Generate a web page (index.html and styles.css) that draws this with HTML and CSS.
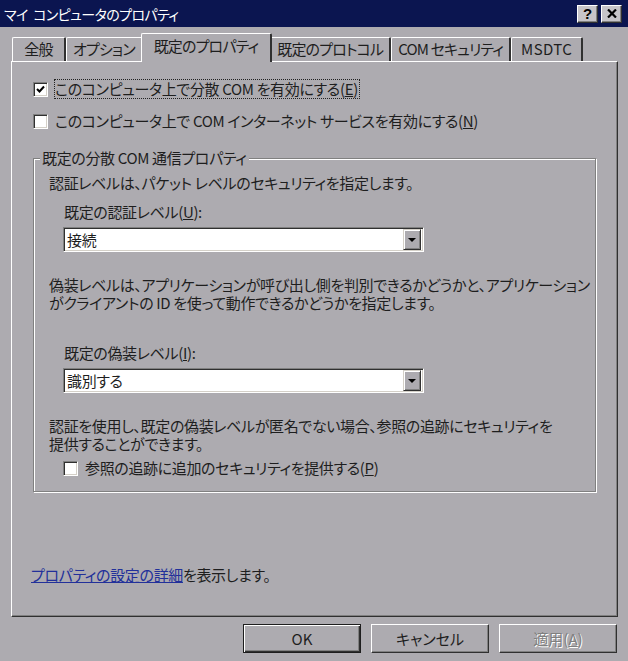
FILE: index.html
```html
<!DOCTYPE html>
<html lang="ja">
<head>
    <meta charset="UTF-8">
    <title>マイ コンピュータのプロパティ</title>
    <link rel="stylesheet" href="styles.css">
</head>
<body>
    <div class="window">
        <div class="titlebar">
            <span class="title">マイ コンピュータのプロパティ</span>
            <div class="caption-buttons">
                <span class="cap-btn">?</span>
                <span class="cap-btn">
                    <svg width="10" height="9" viewBox="0 0 10 9"><path d="M1 0.5 L9 8.5 M9 0.5 L1 8.5" stroke="#000" stroke-width="2.2" fill="none"/></svg>
                </span>
            </div>
        </div>

        <div class="tabs">
            <div class="tab">全般</div>
            <div class="tab">オプション</div>
            <div class="tab active">既定のプロパティ</div>
            <div class="tab">既定のプロトコル</div>
            <div class="tab">COM セキュリティ</div>
            <div class="tab latin">MSDTC</div>
        </div>

        <div class="panel">
            <div class="check-row">
                <span class="checkbox">
                    <svg width="9" height="9" viewBox="0 0 9 9"><path d="M1 4 L3.5 6.5 L8 1.5" stroke="#000" stroke-width="2" fill="none"/></svg>
                </span>
                <span class="check-label focus">このコンピュータ上で分散 COM を有効にする(<u>E</u>)</span>
            </div>
            <div class="check-row second">
                <span class="checkbox"></span>
                <span class="check-label">このコンピュータ上で COM インターネット サービスを有効にする(<u>N</u>)</span>
            </div>

            <fieldset class="group">
                <legend>既定の分散 COM 通信プロパティ</legend>
                <p class="group-text first">認証レベルは、パケット レベルのセキュリティを指定します。</p>
                <div class="field-label">既定の認証レベル(<u>U</u>):</div>
                <div class="combo">
                    <span class="combo-value">接続</span>
                    <span class="combo-arrow"></span>
                </div>
                <p class="group-text after-combo">偽装レベルは、アプリケーションが呼び出し側を判別できるかどうかと、アプリケーション<br>がクライアントの ID を使って動作できるかどうかを指定します。</p>
                <div class="field-label wide-gap">既定の偽装レベル(<u>I</u>):</div>
                <div class="combo">
                    <span class="combo-value">識別する</span>
                    <span class="combo-arrow"></span>
                </div>
                <p class="group-text after-combo">認証を使用し、既定の偽装レベルが匿名でない場合、参照の追跡にセキュリティを<br>提供することができます。</p>
                <div class="check-row inner">
                    <span class="checkbox"></span>
                    <span class="check-label">参照の追跡に追加のセキュリティを提供する(<u>P</u>)</span>
                </div>
            </fieldset>

            <p class="info"><a href="#">プロパティの設定の詳細</a>を表示します。</p>
        </div>

        <div class="buttons">
            <button class="btn default">OK</button>
            <button class="btn">キャンセル</button>
            <button class="btn" disabled>適用(<u>A</u>)</button>
        </div>
    </div>
</body>
</html>
```

FILE: styles.css
```css
* {
    box-sizing: border-box;
}
body {
    margin: 0;
    background: #adabb0;
    font-family: "Noto Sans CJK JP", "Noto Sans", sans-serif;
    font-size: 15px;
    line-height: 18px;
    letter-spacing: -0.35px;
    color: #1e1e1e;
    font-feature-settings: "palt";
}
.window {
    width: 628px;
    height: 661px;
    background: #adabb0;
}
.titlebar {
    height: 27px;
    background: #0b1550;
    display: flex;
    align-items: center;
    justify-content: space-between;
    padding: 0 6px 0 4px;
    color: #fff;
}
.title {
    font-size: 14px;
    letter-spacing: -0.6px;
    word-spacing: 3px;
}
.caption-buttons {
    display: flex;
    gap: 3px;
}
.cap-btn {
    width: 21px;
    height: 18px;
    background: #c6c4c8;
    border: 1px solid;
    border-color: #fff #303030 #303030 #fff;
    box-shadow: inset -1px -1px 0 #808080;
    display: flex;
    align-items: center;
    justify-content: center;
    color: #000;
    font-family: "Liberation Sans", sans-serif;
    font-weight: bold;
    font-size: 15px;
}
.tabs {
    display: flex;
    align-items: flex-end;
    height: 34px;
    padding-left: 12px;
}
.tab {
    height: 24px;
    min-width: 54px;
    padding: 0 6px;
    line-height: 22px;
    text-align: center;
    letter-spacing: -0.85px;
    border-top: 1px solid #fff;
    border-left: 1px solid #fff;
    border-right: 2px solid #303030;
    border-radius: 2px 2px 0 0;
    white-space: nowrap;
}
.tab.latin {
    padding: 0 9px;
    letter-spacing: 0.4px;
}
.tab.active {
    position: relative;
    z-index: 1;
    height: 29px;
    margin: 0 -2px -1px;
    padding: 1px 12px 0;
    background: #adabb0;
}
.panel {
    margin: 0 10px 0 11px;
    height: 556px;
    border-left: 1px solid #fff;
    border-top: 1px solid #fff;
    border-right: 1px solid #303030;
    border-bottom: 1px solid #303030;
    box-shadow: inset -1px -1px 0 #808080;
    padding: 17px 0 0 21px;
}
.check-row {
    display: flex;
    align-items: center;
    height: 20px;
    gap: 6px;
}
.check-row.second {
    margin-top: 12px;
}
.check-row.inner {
    margin: 5px 0 0 14px;
}
.checkbox {
    width: 15px;
    height: 15px;
    background: #fff;
    border: 1px solid;
    border-color: #808080 #fff #fff #808080;
    box-shadow: inset 1px 1px 0 #303030, inset -1px -1px 0 #d4d0c8;
    display: flex;
    align-items: center;
    justify-content: center;
}
.check-label {
    border: 1px dotted transparent;
    height: 20px;
    line-height: 18px;
    padding-right: 1px;
}
.check-label.focus {
    border-color: #222;
}
.group {
    margin: 18px 0 0;
    width: 563px;
    padding: 0 2px 13px 15px;
    border: 1px solid #808080;
    box-shadow: 1px 1px 0 #fff, inset 1px 1px 0 #fff;
}
.group legend {
    margin-left: -9px;
    padding: 0 2px;
    line-height: 18px;
    background: #adabb0;
}
.group-text {
    margin: 0;
    white-space: nowrap;
}
.group-text.first {
    margin-top: 7px;
}
.group-text.after-combo {
    margin-top: 24px;
}
.field-label {
    margin: 11px 0 0 15px;
}
.field-label.wide-gap {
    margin-top: 32px;
}
.combo {
    margin: 6px 0 0 14px;
    width: 361px;
    height: 25px;
    background: #fff;
    border: 1px solid;
    border-color: #808080 #fff #fff #808080;
    box-shadow: inset 1px 1px 0 #303030, inset -1px -1px 0 #d4d0c8;
    padding: 2px 2px 2px 3px;
    display: flex;
    align-items: center;
    justify-content: space-between;
}
.combo-arrow {
    width: 18px;
    height: 21px;
    background: #adabb0;
    border: 1px solid;
    border-color: #d4d0c8 #303030 #303030 #d4d0c8;
    box-shadow: inset 1px 1px 0 #fff, inset -1px -1px 0 #808080;
    display: flex;
    align-items: center;
    justify-content: center;
}
.combo-arrow::after {
    content: "";
    border-left: 4px solid transparent;
    border-right: 4px solid transparent;
    border-top: 4px solid #000;
    margin-top: 1px;
}
.info {
    margin: 74px 0 0 -2px;
}
.info a {
    color: #22309a;
    text-decoration: underline;
}
.buttons {
    display: flex;
    justify-content: flex-end;
    gap: 10px;
    padding: 7px 11px 0 0;
}
.btn {
    width: 118px;
    height: 29px;
    background: #adabb0;
    font: inherit;
    color: #1e1e1e;
    border: 1px solid;
    border-color: #fff #303030 #303030 #fff;
    box-shadow: inset -1px -1px 0 #808080;
    padding: 0;
}
.btn.default {
    border-color: #1e1e1e;
    box-shadow: inset 1px 1px 0 #fff, inset -1px -1px 0 #303030, inset -2px -2px 0 #808080;
}
.btn:disabled {
    color: #808080;
    text-shadow: 1px 1px 0 #fff;
}
```
